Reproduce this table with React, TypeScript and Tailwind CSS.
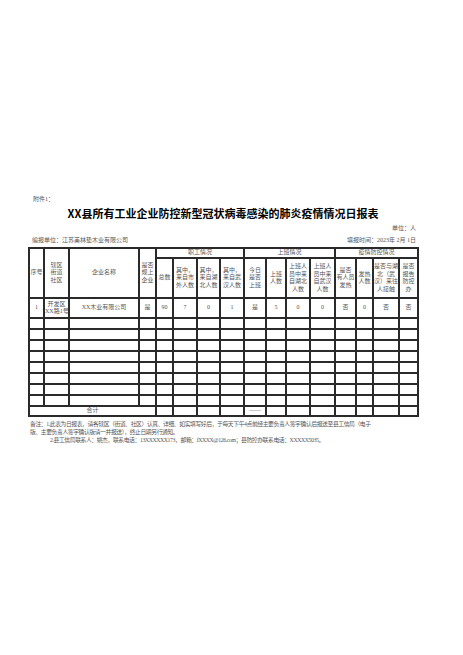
const cellFont = { fontFamily: '"Liberation Serif", "Noto Sans CJK SC", serif' };

const widths = [15, 25, 70, 17, 17, 24, 23, 24, 22, 20, 24, 25, 21, 17, 26, 19];

const subHeads: string[][] = [
  ["总数"],
  ["其中，", "来自市", "外人数"],
  ["其中，", "来自湖", "北人数"],
  ["其中，", "来自武", "汉人数"],
  ["今日", "是否", "上班"],
  ["上班", "人数"],
  ["上班人", "员中来", "自湖北", "人数"],
  ["上班人", "员中来", "自武汉", "人数"],
  ["是否", "有人员", "发热"],
  ["发热", "人数"],
  ["是否与湖", "北（武", "汉）来往", "人接触"],
  ["是否", "报告", "防控", "办"],
];

const dataRow = ["1", "开发区|XX路1号", "XX木业有限公司", "是", "90", "7", "0", "1", "是", "5", "0", "0", "否", "0", "否", "否"];

const td = "border-2 border-[#2a2a2a] p-0 text-center align-middle font-normal text-[6px] leading-[7.5px] text-[#555]";

function Lines({ lines }: { lines: string[] }) {
  return (
    <>
      {lines.map((l, i) => (
        <div key={i} className="whitespace-nowrap">{l}</div>
      ))}
    </>
  );
}

export default function App() {
  return (
    <div className="w-[463px] h-[655px] bg-white overflow-hidden" style={cellFont}>
      <div className="pt-[195px] pl-[28px] w-[418px] flex flex-col">
        <div className="ml-[5px] text-[6px] leading-[8px] text-[#555]">附件1：</div>

        <div
          className="mt-[3px] w-[390px] text-center text-[11px] leading-[14px] font-bold text-black whitespace-nowrap"
          style={{ fontFamily: '"Noto Sans CJK SC", sans-serif' }}
        >
          XX县所有工业企业防控新型冠状病毒感染的肺炎疫情情况日报表
        </div>

        <div className="mt-[4px] w-[388px] text-right text-[6px] leading-[8px] text-[#555]">单位：人</div>

        <div className="mt-[4px] w-[388px] flex justify-between text-[6px] leading-[8px] text-[#555]">
          <span className="ml-[4px]">编报单位：江苏美林垫木业有限公司</span>
          <span>填报时间：2023年 2月 1日</span>
        </div>

        <table className="mt-[3px] table-fixed border-collapse w-[390px]">
          <colgroup>
            {widths.map((w, i) => (
              <col key={i} style={{ width: w }} />
            ))}
          </colgroup>
          <thead>
            <tr className="h-[10px]">
              <th rowSpan={2} className={td}>序号</th>
              <th rowSpan={2} className={td}><Lines lines={["辖区", "街道", "社区"]} /></th>
              <th rowSpan={2} className={td}>企业名称</th>
              <th rowSpan={2} className={td}><Lines lines={["是否", "规上", "企业"]} /></th>
              <th colSpan={4} className={td}>职工情况</th>
              <th colSpan={4} className={td}>上班情况</th>
              <th colSpan={4} className={td}>疫情防控情况</th>
            </tr>
            <tr className="h-[40px]">
              {subHeads.map((s, i) => (
                <th key={i} className={td}><Lines lines={s} /></th>
              ))}
            </tr>
          </thead>
          <tbody>
            <tr className="h-[20px]">
              {dataRow.map((v, i) => (
                <td key={i} className={td}><Lines lines={v.split("|")} /></td>
              ))}
            </tr>
            {Array.from({ length: 8 }).map((_, r) => (
              <tr key={r} className="h-[11px]">
                {widths.map((_, i) => (
                  <td key={i} className={td}></td>
                ))}
              </tr>
            ))}
            <tr className="h-[10px]">
              <td colSpan={4} className={td}>合计</td>
              <td className={td}></td>
              <td className={td}></td>
              <td className={td}></td>
              <td className={td}></td>
              <td className={td}>——</td>
              {Array.from({ length: 7 }).map((_, i) => (
                <td key={i} className={td}></td>
              ))}
            </tr>
          </tbody>
        </table>

        <div className="mt-[3px] ml-[2px] text-[5.8px] leading-[8px] tracking-[-0.4px] text-[#555] whitespace-nowrap">
          <div>备注：1.此表为日报表，请各辖区（街道、社区）认真、详细、如实填写好后，于每天下午4点前经主要负责人签字确认后报送至县工信局（电子</div>
          <div>版、主要负责人签字确认版请一并报送），终止日期另行通知。</div>
          <div className="ml-[20px]">2.县工信局联系人：姚杰，联系电话：13XXXXXX173，邮箱：fXXXX@126.com；县防控办联系电话：XXXXX5035。</div>
        </div>
      </div>
    </div>
  );
}
